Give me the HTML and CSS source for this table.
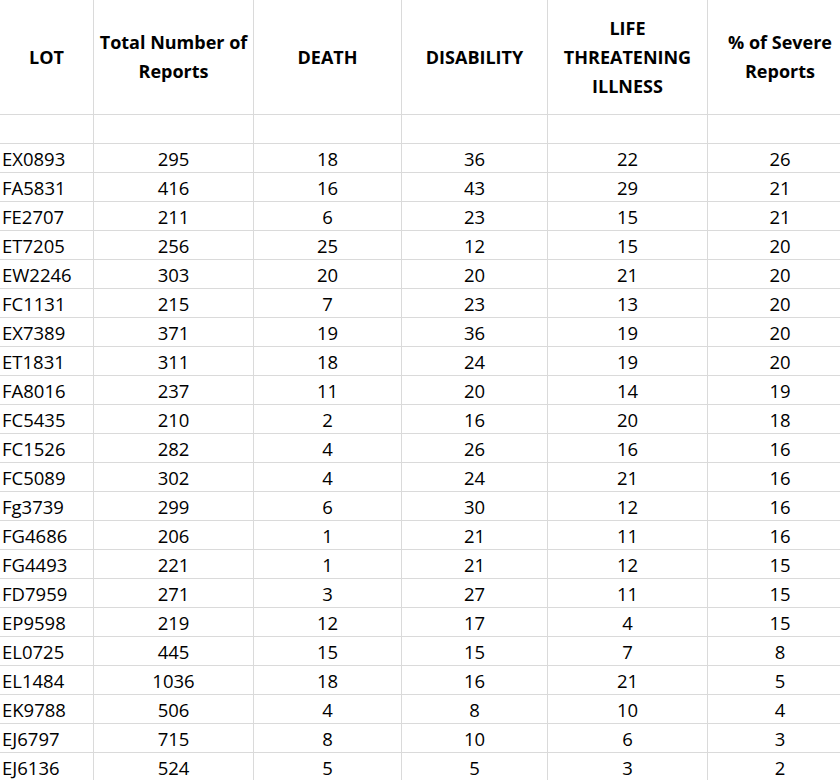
FILE: index.html
```html
<!DOCTYPE html>
<html>
<head>
<meta charset="utf-8">
<link rel="stylesheet" href="styles.css">
</head>
<body>
<div class="sheet" role="table">
  <div class="c h">LOT</div>
  <div class="c h">Total Number of<br>Reports</div>
  <div class="c h">DEATH</div>
  <div class="c h">DISABILITY</div>
  <div class="c h">LIFE<br>THREATENING<br>ILLNESS</div>
  <div class="c h">% of Severe<br>Reports</div>

  <div class="c e"></div><div class="c e"></div><div class="c e"></div><div class="c e"></div><div class="c e"></div><div class="c e"></div>

  <div class="c l">EX0893</div><div class="c n">295</div><div class="c n">18</div><div class="c n">36</div><div class="c n">22</div><div class="c n">26</div>
  <div class="c l">FA5831</div><div class="c n">416</div><div class="c n">16</div><div class="c n">43</div><div class="c n">29</div><div class="c n">21</div>
  <div class="c l">FE2707</div><div class="c n">211</div><div class="c n">6</div><div class="c n">23</div><div class="c n">15</div><div class="c n">21</div>
  <div class="c l">ET7205</div><div class="c n">256</div><div class="c n">25</div><div class="c n">12</div><div class="c n">15</div><div class="c n">20</div>
  <div class="c l">EW2246</div><div class="c n">303</div><div class="c n">20</div><div class="c n">20</div><div class="c n">21</div><div class="c n">20</div>
  <div class="c l">FC1131</div><div class="c n">215</div><div class="c n">7</div><div class="c n">23</div><div class="c n">13</div><div class="c n">20</div>
  <div class="c l">EX7389</div><div class="c n">371</div><div class="c n">19</div><div class="c n">36</div><div class="c n">19</div><div class="c n">20</div>
  <div class="c l">ET1831</div><div class="c n">311</div><div class="c n">18</div><div class="c n">24</div><div class="c n">19</div><div class="c n">20</div>
  <div class="c l">FA8016</div><div class="c n">237</div><div class="c n">11</div><div class="c n">20</div><div class="c n">14</div><div class="c n">19</div>
  <div class="c l">FC5435</div><div class="c n">210</div><div class="c n">2</div><div class="c n">16</div><div class="c n">20</div><div class="c n">18</div>
  <div class="c l">FC1526</div><div class="c n">282</div><div class="c n">4</div><div class="c n">26</div><div class="c n">16</div><div class="c n">16</div>
  <div class="c l">FC5089</div><div class="c n">302</div><div class="c n">4</div><div class="c n">24</div><div class="c n">21</div><div class="c n">16</div>
  <div class="c l">Fg3739</div><div class="c n">299</div><div class="c n">6</div><div class="c n">30</div><div class="c n">12</div><div class="c n">16</div>
  <div class="c l">FG4686</div><div class="c n">206</div><div class="c n">1</div><div class="c n">21</div><div class="c n">11</div><div class="c n">16</div>
  <div class="c l">FG4493</div><div class="c n">221</div><div class="c n">1</div><div class="c n">21</div><div class="c n">12</div><div class="c n">15</div>
  <div class="c l">FD7959</div><div class="c n">271</div><div class="c n">3</div><div class="c n">27</div><div class="c n">11</div><div class="c n">15</div>
  <div class="c l">EP9598</div><div class="c n">219</div><div class="c n">12</div><div class="c n">17</div><div class="c n">4</div><div class="c n">15</div>
  <div class="c l">EL0725</div><div class="c n">445</div><div class="c n">15</div><div class="c n">15</div><div class="c n">7</div><div class="c n">8</div>
  <div class="c l">EL1484</div><div class="c n">1036</div><div class="c n">18</div><div class="c n">16</div><div class="c n">21</div><div class="c n">5</div>
  <div class="c l">EK9788</div><div class="c n">506</div><div class="c n">4</div><div class="c n">8</div><div class="c n">10</div><div class="c n">4</div>
  <div class="c l">EJ6797</div><div class="c n">715</div><div class="c n">8</div><div class="c n">10</div><div class="c n">6</div><div class="c n">3</div>
  <div class="c l">EJ6136</div><div class="c n">524</div><div class="c n">5</div><div class="c n">5</div><div class="c n">3</div><div class="c n">2</div>
</div>
</body>
</html>
```

FILE: styles.css
```css
html, body {
  margin: 0;
  padding: 0;
  background: #ffffff;
  overflow: hidden;
}

.sheet {
  display: grid;
  grid-template-columns: 94px 160px 148px 146px 160px 145px;
  grid-template-rows: 115px repeat(23, 29px);
  font-family: "Open Sans", "Noto Sans", sans-serif;
  font-size: 18.5px;
  color: #000000;
}

.c {
  box-sizing: border-box;
  border-right: 1px solid #dadada;
  border-bottom: 1px solid #dadada;
  white-space: nowrap;
}

.h {
  display: flex;
  align-items: center;
  justify-content: center;
  text-align: center;
  font-weight: 700;
  font-size: 18px;
  line-height: 29px;
}

.l, .n {
  line-height: 28px;
  padding-top: 1px;
}

.l {
  padding-left: 2px;
}

.n {
  text-align: center;
}
```
